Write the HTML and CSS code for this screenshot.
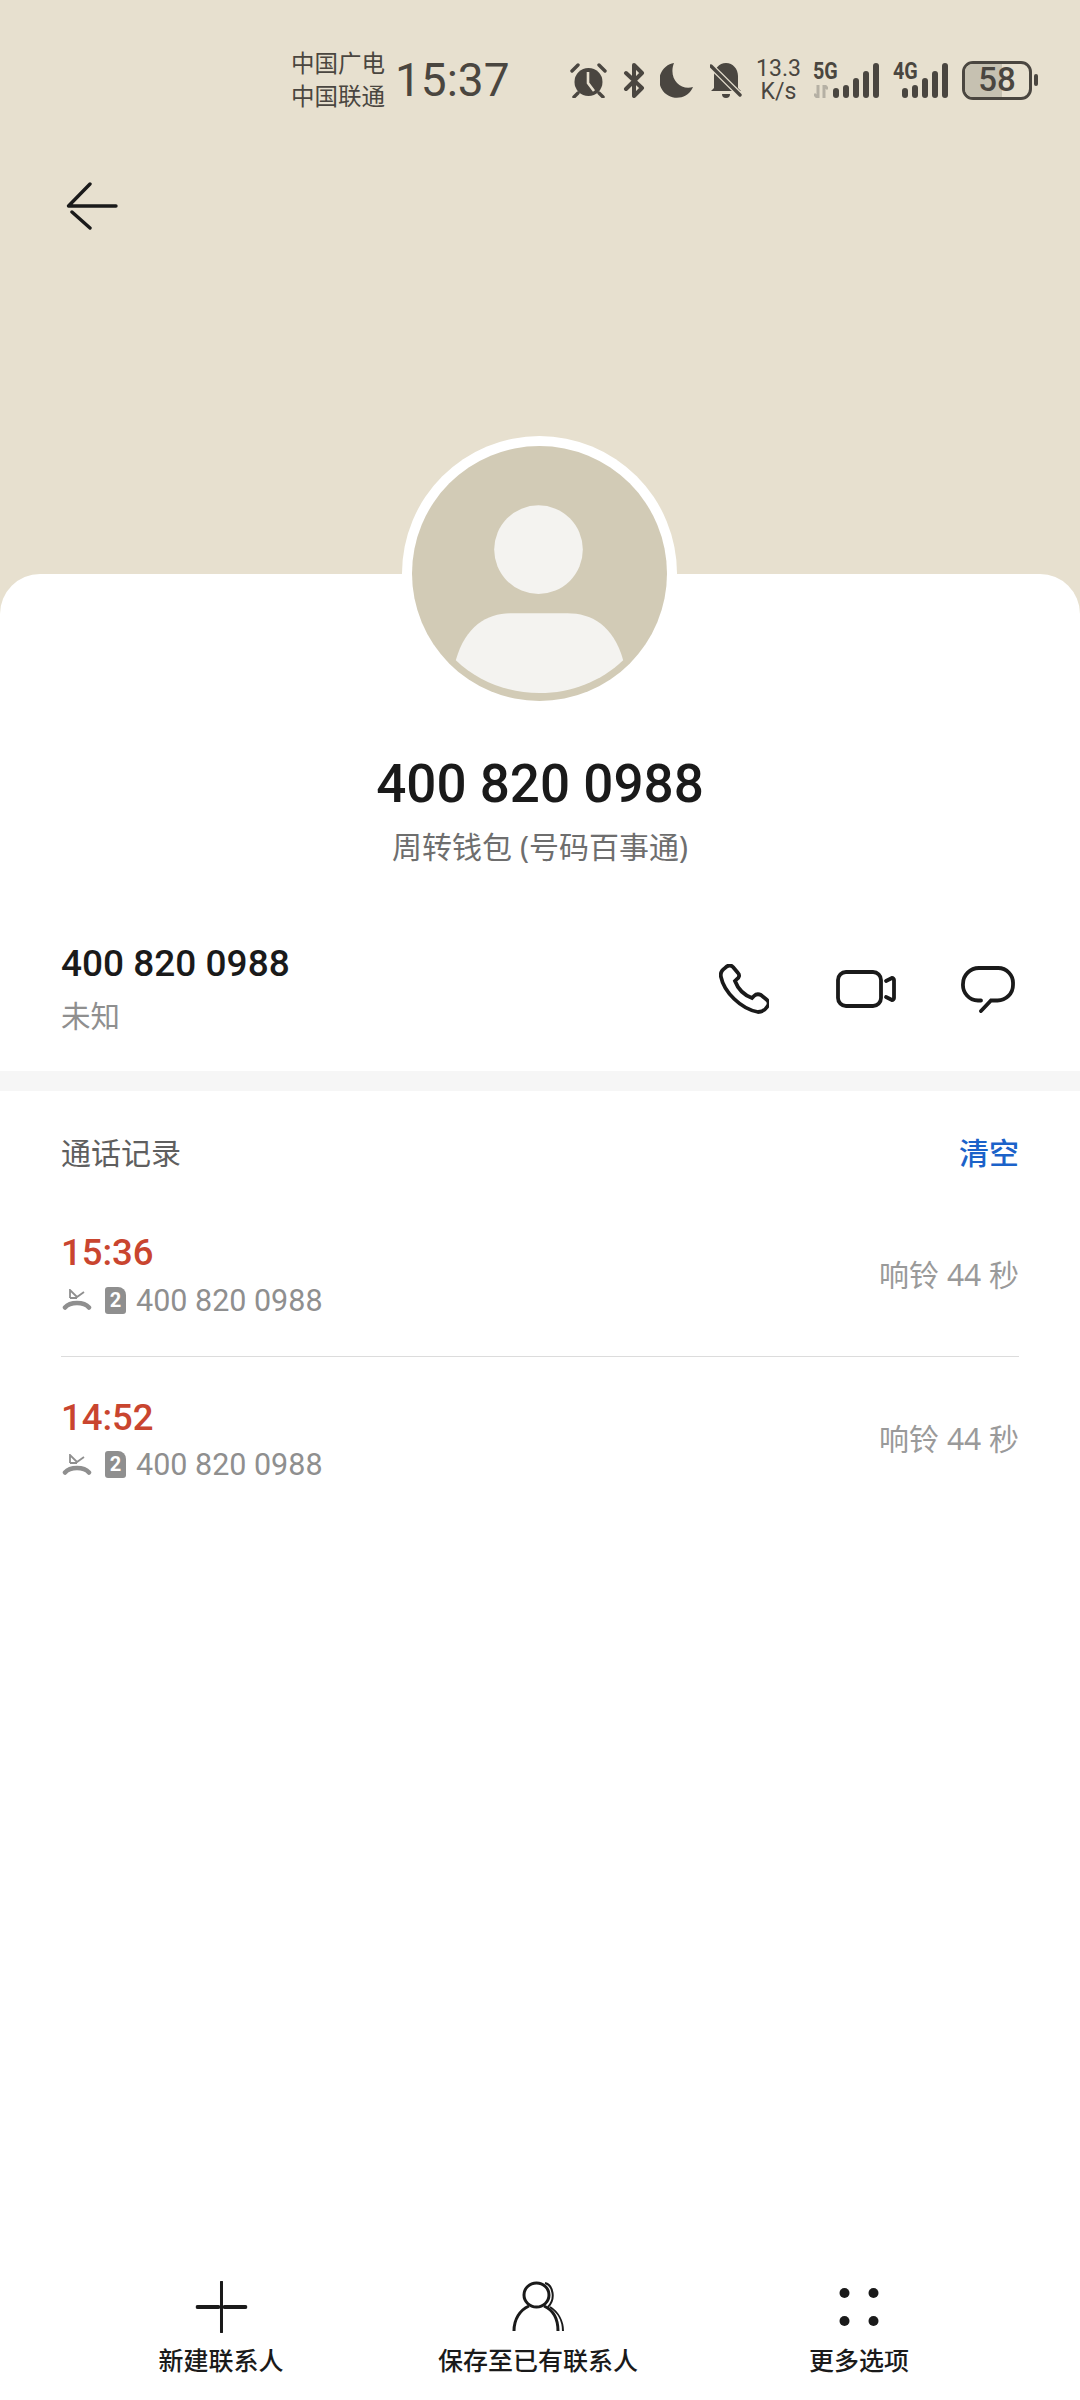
FILE: index.html
```html
<!DOCTYPE html>
<html lang="zh">
<head>
<meta charset="utf-8">
<title>Contact</title>
<link rel="stylesheet" href="styles.css">
</head>
<body>
<div class="page">
  <header class="hero">
    <div class="status">
      <div class="carriers"><span>中国广电</span><span>中国联通</span></div>
      <div class="clock">15:37</div>
      <svg class="st-ic alarm" viewBox="0 0 37 35"><circle cx="18.5" cy="19" r="14" fill="#4a4640"/><path d="M18 9v11l6 8" fill="none" stroke="#e7e0cf" stroke-width="2.6"/><path d="M2 8 8 2M35 8 29 2M8 30l-4 4M29 30l4 4" stroke="#4a4640" stroke-width="3.4" stroke-linecap="round"/></svg>
      <svg class="st-ic bt" viewBox="0 0 22 35"><path d="M3 10 19 25 11 33V2l8 8L3 26" fill="none" stroke="#4a4640" stroke-width="4" stroke-linejoin="round" stroke-linecap="round"/></svg>
      <svg class="st-ic moon" viewBox="0 0 33 35"><path d="M14 0a17.500 17.500 0 1 0 19 24C20 28 8 15 14 0z" fill="#4a4640"/></svg>
      <svg class="st-ic bell" viewBox="0 0 32 37"><path d="M16 1c7 0 12 6 12 13v12l3 3H1l3-3V14C4 7 9 1 16 1z" fill="#4a4640"/><path d="M12 32a4 4 0 0 0 8 0z" fill="#4a4640"/><path d="M0 3l30 30" stroke="#e7e0cf" stroke-width="6"/><path d="M1 4l29 29" stroke="#4a4640" stroke-width="3.4" stroke-linecap="round"/></svg>
      <div class="speed"><span>13.3</span><span>K/s</span></div>
      <div class="net net5">
        <div class="net-l"><b>5G</b><svg class="arrows" viewBox="0 0 14 13"><path d="M4 0v13M0 9l4 4M10 13V0M10 0l4 4" stroke="#b5b0a4" stroke-width="3" fill="none"/></svg></div>
        <div class="bars"><i class="b1"></i><i class="b2"></i><i class="b3"></i><i class="b4"></i><i class="b5"></i></div>
      </div>
      <div class="net net4">
        <div class="net-l"><b>4G</b></div>
        <div class="bars"><i class="b1"></i><i class="b2"></i><i class="b3"></i><i class="b4"></i><i class="b5"></i></div>
      </div>
      <div class="battery"><div class="batt-body"><div class="batt-fill"></div><span>58</span></div><div class="batt-tip"></div></div>
    </div>
    <svg class="back" viewBox="0 0 52 48"><path d="M50 24H2.500L24 2M6 30l18 16" fill="none" stroke="#1a1a1a" stroke-width="3.400" stroke-linecap="round" stroke-linejoin="round"/></svg>
  </header>
  <main class="sheet">
    <div class="avatar">
      <svg viewBox="0 0 256 256"><circle cx="128" cy="128" r="128" fill="#d2cbb6"/><circle cx="127" cy="104" r="44.500" fill="#f4f3f0"/><path d="M44 215C54 180 76 168 100 168h56c24 0 46 12 56 47C190 236 160 248 128 248S66 236 44 215z" fill="#f4f3f0"/></svg>
    </div>
    <h1 class="name">400 820 0988</h1>
    <p class="sub">周转钱包 (号码百事通)</p>
    <section class="contact">
      <div class="contact-text">
        <div class="num">400 820 0988</div>
        <div class="loc">未知</div>
      </div>
      <div class="actions">
        <svg class="ac-phone" viewBox="0 0 50 50"><path d="M6 4c3-3 6-3 8-1l5 6c2 2 1 5-1 6l-2 2c3 8 9 14 17 17l2-2c2-2 5-2 7-1l6 5c2 2 2 5 0 7-2 3-5 5-9 5C22 45 5 28 2 13c-1-4 1-7 4-9z" fill="none" stroke="#1a1a1a" stroke-width="3.800"/></svg>
        <svg class="ac-video" viewBox="0 0 60 38"><rect x="2" y="2" width="43" height="34" rx="8" fill="none" stroke="#1a1a1a" stroke-width="3.800"/><path d="M50 11l6-3c1 0 2 1 2 2v18c0 1-1 2-2 2l-6-3" fill="none" stroke="#1a1a1a" stroke-width="3.800" stroke-linecap="round"/></svg>
        <svg class="ac-msg" viewBox="0 0 54 47"><path d="M20 34.500h-3A15.500 15.500 0 0 1 2 18 16 16 0 0 1 18 2h19a15 15 0 0 1 15 16v1a15.500 15.500 0 0 1-15.500 15.500H30L20 45" fill="none" stroke="#1a1a1a" stroke-width="3.800" stroke-linecap="round"/></svg>
      </div>
    </section>
    <div class="divider"></div>
    <section class="log">
      <div class="log-head"><span class="log-title">通话记录</span><span class="log-clear">清空</span></div>
      <div class="row">
        <div class="row-main">
          <div class="time">15:36</div>
          <div class="row-sub">
            <svg class="miss" viewBox="0 0 30 22"><path d="M3 18.500c3-3.500 7-4.500 12-4.500s9 1 12 4.500" fill="none" stroke="#8f8f8f" stroke-width="4.500" stroke-linecap="round"/><path d="M8 9V1l7 7 7-5M8 9h7" fill="none" stroke="#8f8f8f" stroke-width="1.800"/></svg>
            <span class="sim">2</span>
            <span class="row-num">400 820 0988</span>
          </div>
        </div>
        <div class="row-dur">响铃 44 秒</div>
      </div>
      <div class="row row-last">
        <div class="row-main">
          <div class="time">14:52</div>
          <div class="row-sub">
            <svg class="miss" viewBox="0 0 30 22"><path d="M3 18.500c3-3.500 7-4.500 12-4.500s9 1 12 4.500" fill="none" stroke="#8f8f8f" stroke-width="4.500" stroke-linecap="round"/><path d="M8 9V1l7 7 7-5M8 9h7" fill="none" stroke="#8f8f8f" stroke-width="1.800"/></svg>
            <span class="sim">2</span>
            <span class="row-num">400 820 0988</span>
          </div>
        </div>
        <div class="row-dur">响铃 44 秒</div>
      </div>
    </section>
  </main>
  <nav class="toolbar">
    <div class="tool tool-a">
      <svg viewBox="0 0 52 52"><path d="M26 1v50" fill="none" stroke="#1a1a1a" stroke-width="3" stroke-linecap="round"/><path d="M2 26h21M29 26h21" fill="none" stroke="#1a1a1a" stroke-width="4" stroke-linecap="round"/></svg>
      <span>新建联系人</span>
    </div>
    <div class="tool tool-b">
      <svg viewBox="0 0 52 52"><ellipse cx="24.500" cy="14" rx="12.500" ry="12" fill="none" stroke="#1a1a1a" stroke-width="3"/><path d="M2 50c0-12 6-21 15-25M32 25c9 4 14 13 14 25" fill="none" stroke="#1a1a1a" stroke-width="3"/><path d="M33 2c8 2 11 16 3 24M38 26c8 5 13 14 13 24" fill="none" stroke="#1a1a1a" stroke-width="2"/></svg>
      <span>保存至已有联系人</span>
    </div>
    <div class="tool tool-c">
      <svg viewBox="0 0 52 52"><circle cx="11.500" cy="12" r="5" fill="#1a1a1a"/><circle cx="40.500" cy="12" r="5" fill="#1a1a1a"/><circle cx="11.500" cy="40" r="5" fill="#1a1a1a"/><circle cx="40.500" cy="40" r="5" fill="#1a1a1a"/></svg>
      <span>更多选项</span>
    </div>
  </nav>
</div>
</body>
</html>
```
FILE: styles.css
```css
* { box-sizing: border-box; }
html, body { margin: 0; padding: 0; background: #fff; }
body { font-family: "Noto Sans", "Noto Sans CJK SC", sans-serif; color: #1a1a1a; }
.page { width: 1080px; height: 2400px; display: flex; flex-direction: column; overflow: hidden; }

.hero { height: 634px; background: #e7e0cf; padding: 47px 0 0 66px; flex: none; }
.status { display: flex; align-items: center; height: 66px; padding-left: 225px; color: #4a4640; }
.carriers { display: flex; flex-direction: column; font-size: 23.500px; line-height: 33px; width: 94px; flex: none; white-space: nowrap; }
.clock { font-family: Roboto, sans-serif; font-size: 46px; font-weight: 400; margin-left: 10px; width: 113px; flex: none; white-space: nowrap; }
.st-ic { flex: none; display: block; }
.alarm { width: 37px; height: 35px; margin-left: 62px; }
.bt { width: 22px; height: 35px; margin-left: 16px; }
.moon { width: 33px; height: 35px; margin-left: 15px; }
.bell { width: 32px; height: 37px; margin-left: 17px; }
.speed { display: flex; flex-direction: column; align-items: center; margin-left: 15px; width: 43px; font-family: Roboto, sans-serif; font-size: 23px; line-height: 23px; flex: none; }
.net { display: flex; align-items: flex-end; height: 36px; flex: none; }
.net5 { margin-left: 13px; width: 65px; }
.net4 { margin-left: 15px; width: 54px; }
.net-l { display: flex; flex-direction: column; justify-content: space-between; height: 36px; }
.net5 .net-l { width: 20px; }
.net4 .net-l { width: 9px; }
.net-l b { font-family: Roboto, sans-serif; font-weight: 700; font-size: 24px; line-height: 18px; display: block; width: 30px; transform: scaleX(.82); transform-origin: left; white-space: nowrap; }
.arrows { width: 14px; height: 13px; display: block; margin-left: 1px; }
.bars { display: flex; align-items: flex-end; gap: 4px; }
.bars i { display: block; width: 6px; border-radius: 3px; background: #4a4640; }
.b1 { height: 10px; } .b2 { height: 13px; } .b3 { height: 20px; } .b4 { height: 27px; } .b5 { height: 35px; }
.battery { display: flex; align-items: center; margin-left: 15px; flex: none; }
.batt-body { position: relative; width: 70px; height: 39px; border: 3px solid #4a4640; border-radius: 11px; overflow: hidden; display: flex; align-items: center; justify-content: center; }
.batt-fill { position: absolute; left: 0; top: 0; bottom: 0; width: 58%; background: #c6c1b1; }
.batt-body span { position: relative; font-family: Roboto, sans-serif; font-weight: 500; font-size: 33px; line-height: 32px; }
.batt-tip { width: 4px; height: 12px; margin-left: 2px; border-radius: 2px; background: #4a4640; }
.back { display: block; width: 52px; height: 48px; margin-top: 69px; }

.sheet { position: relative; flex: 1; background: #fff; border-radius: 40px 40px 0 0; margin-top: -60px; display: flex; flex-direction: column; align-items: stretch; }
.avatar { position: absolute; left: 402px; top: -138px; width: 275px; height: 275px; border-radius: 50%; background: #fff; padding: 10px; }
.avatar svg { display: block; width: 255px; height: 255px; }
.name { margin: 178px 0 0; font-family: Roboto, sans-serif; font-size: 53px; line-height: 64px; font-weight: 500; text-align: center; }
.sub { margin: 10px 0 0; font-size: 30px; line-height: 42px; color: #6e6e6e; text-align: center; }
.contact { display: flex; justify-content: space-between; align-items: center; margin-top: 78px; padding: 0 65px 0 61px; height: 88px; }
.num { font-family: Roboto, sans-serif; font-size: 37px; line-height: 44px; font-weight: 500; }
.loc { font-size: 29.500px; line-height: 44px; color: #8f8f8f; margin-top: 8px; }
.actions { display: flex; align-items: center; gap: 66px; }
.actions svg { display: block; }
.ac-phone { width: 50px; height: 50px; margin-top: -2px; }
.ac-video { width: 60px; height: 38px; margin-left: 1px; margin-top: -2px; }
.ac-msg { width: 54px; height: 47px; margin-left: -1px; margin-top: -2px; }
.divider { height: 20px; background: #f6f6f6; margin-top: 37px; }
.log { padding: 0 61px; }
.log-head { display: flex; justify-content: space-between; align-items: center; height: 102px; padding: 18px 0 0; }
.log-title { font-size: 30px; color: #5f5f5f; }
.log-clear { font-size: 30px; color: #1b62c9; font-weight: 500; }
.row { display: flex; justify-content: space-between; align-items: center; height: 164px; padding-top: 2px; border-bottom: 1px solid #dcdcdc; }
.row-last { border-bottom: 0; }
.time { font-family: Roboto, sans-serif; font-size: 36.500px; line-height: 44px; font-weight: 500; color: #c9452f; }
.row-sub { display: flex; align-items: center; margin-top: 5px; height: 40px; }
.miss { width: 30px; height: 22px; display: block; margin-left: 1px; }
.sim { width: 21px; height: 27px; margin-left: 13px; background: #8f8f8f; color: #fff; font-family: Roboto, sans-serif; font-weight: 700; font-size: 20px; line-height: 27px; text-align: center; border-radius: 3px 8px 3px 3px; }
.row-num { font-family: Roboto, sans-serif; font-size: 30.500px; color: #8f8f8f; margin-left: 10px; }
.row-dur { font-size: 30px; color: #9a9a9a; white-space: nowrap; margin-bottom: 6px; }

.toolbar { position: relative; flex: none; height: 119px; display: flex; }
.tool { display: flex; flex-direction: column; align-items: center; font-size: 25px; line-height: 36px; font-weight: 500; position: absolute; top: 0; transform: translateX(-50%); white-space: nowrap; }
.tool svg { display: block; width: 52px; height: 52px; margin-bottom: 9px; }
.tool-a { left: 221px; }
.tool-b { left: 538px; }
.tool-c { left: 859px; }
```
